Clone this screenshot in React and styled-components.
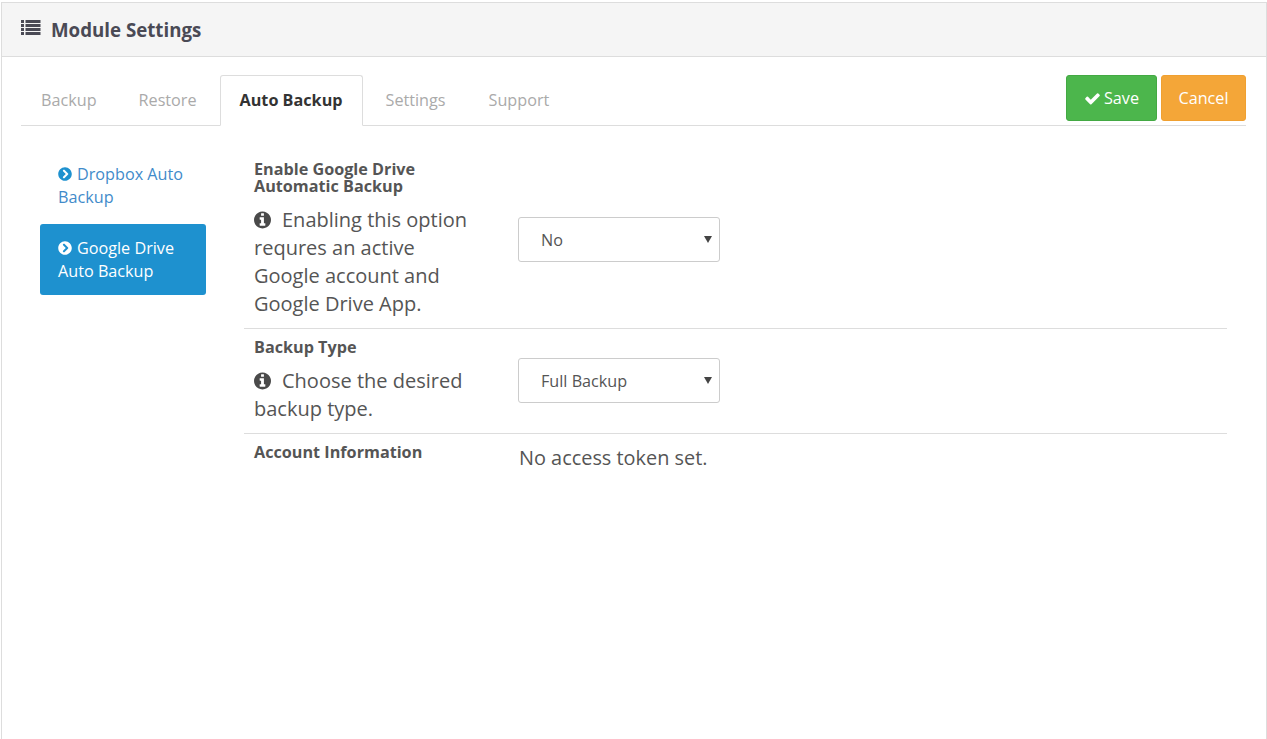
import styled, { createGlobalStyle } from "styled-components";
import { FaChevronCircleRight } from "react-icons/fa";

const GlobalStyle = createGlobalStyle`
  html, body {
    margin: 0;
    padding: 0;
    background: #fff;
    overflow: hidden;
    font-family: "Open Sans", sans-serif;
    color: #555;
  }
`;

const Panel = styled.div`
  height: 737px;
  margin: 2px 0 0 1px;
  width: 1266px;
  box-sizing: border-box;
  border: 1px solid #ddd;
  border-bottom: 0;
`;

const PanelHeader = styled.div`
  height: 53px;
  display: flex;
  align-items: center;
  gap: 10px;
  padding-left: 19px;
  background: #f5f5f5;
  border-bottom: 1px solid #ddd;
  color: #4a4a55;
`;

const PanelTitle = styled.h3`
  margin: 0;
  font-size: 18.7px;
  font-weight: 700;
  line-height: 26px;
`;

const PanelBody = styled.div`
  padding: 18px 20px 0 19px;
`;

const TabBar = styled.div`
  display: flex;
  height: 50px;
  border-bottom: 1px solid #ddd;
`;

const Tab = styled.a`
  box-sizing: border-box;
  height: 51px;
  margin-right: 3px;
  padding: 12px 19px 0;
  font-size: 16.2px;
  line-height: 24px;
  border: 1px solid ${(p) => (p.$active ? "#ddd" : "transparent")};
  border-bottom-color: ${(p) => (p.$active ? "#fff" : "transparent")};
  border-radius: 3px 3px 0 0;
  background: ${(p) => (p.$active ? "#fff" : "transparent")};
  color: ${(p) => (p.$active ? "#333" : "#aaa")};
  font-weight: ${(p) => (p.$active ? 700 : 400)};

  &:first-child {
    margin-right: 2px;
  }
`;

const Actions = styled.div`
  display: flex;
  gap: 4px;
  margin-left: auto;
  align-items: flex-start;
`;

const Button = styled.button`
  display: flex;
  align-items: center;
  justify-content: center;
  gap: 3px;
  height: 46px;
  width: ${(p) => p.$width}px;
  padding: 0;
  font-family: inherit;
  font-size: 16.2px;
  color: #fff;
  background: ${(p) => p.$bg};
  border: 1px solid ${(p) => p.$edge};
  border-radius: 3px;
`;

const Columns = styled.div`
  display: flex;
  padding: 24px 19px 0;
`;

const SideNav = styled.nav`
  flex: 0 0 166px;
  display: flex;
  flex-direction: column;
  gap: 3px;
  margin-right: 38px;
`;

const SideLink = styled.a`
  box-sizing: border-box;
  height: 71px;
  padding: 13px 18px;
  font-size: 16.2px;
  line-height: 23px;
  border-radius: 3px;
  background: ${(p) => (p.$active ? "#1e91cf" : "transparent")};
  color: ${(p) => (p.$active ? "#fff" : "#428bca")};

  svg {
    font-size: 14px;
    vertical-align: -1px;
    margin-right: 5px;
    color: ${(p) => (p.$active ? "#fff" : "#1e91cf")};
  }
`;

const Rows = styled.div`
  flex: 1;
  padding-top: 1px;
`;

const Row = styled.div`
  display: grid;
  grid-template-columns: 274px 1fr;
  border-top: ${(p) => (p.$first ? "0" : "1px solid #ddd")};
`;

const LabelCell = styled.div`
  padding: 10px 44px 10px 10px;
`;

const Label = styled.div`
  font-size: 16.2px;
  font-weight: 700;
  line-height: 17px;
  color: #555;
`;

const Help = styled.div`
  margin-top: 11px;
  font-size: 20px;
  line-height: 28px;
  color: #555;

  svg {
    width: 17px;
    height: 20px;
    vertical-align: -3px;
    margin-right: 11px;
    color: #4a4a4a;
  }
`;

const ValueCell = styled.div`
  display: flex;
  align-items: center;
  padding: 10px 0 ${(p) => p.$bottom ?? 10}px;
`;

const SelectWrap = styled.div`
  position: relative;
  width: 202px;
  height: 45px;

  &::after {
    content: "";
    position: absolute;
    top: 19px;
    right: 8px;
    border-style: solid;
    border-width: 7px 4px 0;
    border-color: #444 transparent transparent;
    pointer-events: none;
  }
`;

const Select = styled.select`
  appearance: none;
  box-sizing: border-box;
  width: 100%;
  height: 100%;
  padding: 0 24px 0 22px;
  font-family: inherit;
  font-size: 16.2px;
  color: #555;
  background: #fff;
  border: 1px solid #ccc;
  border-radius: 3px;
`;

const Value = styled.div`
  padding-left: 1px;
  font-size: 19.9px;
  line-height: 28px;
  color: #555;
`;

const ListBar = styled.rect`
  fill: currentColor;
`;

const ListIcon = () => (
  <svg width="20" height="16" viewBox="0 0 20 16" style={{ marginBottom: 4 }}>
    {[0, 4, 8, 12].map((y) => (
      <g key={y}>
        <ListBar x="0" y={y} width="3" height="3" />
        <ListBar x="4.5" y={y} width="15" height="3" />
      </g>
    ))}
  </svg>
);

const CheckIcon = () => (
  <svg width="17" height="17" viewBox="0 0 1792 1792" fill="currentColor">
    <path d="M1671 566q0 40-28 68l-724 724-136 136q-28 28-68 28t-68-28l-136-136-362-362q-28-28-28-68t28-68l136-136q28-28 68-28t68 28l294 295 656-657q28-28 68-28t68 28l136 136q28 28 28 68z" />
  </svg>
);

const InfoIcon = () => (
  <svg viewBox="0 0 1536 1792" fill="currentColor">
    <path d="M1024 1376v-160q0-14-9-23t-23-9h-96v-512q0-14-9-23t-23-9h-320q-14 0-23 9t-9 23v160q0 14 9 23t23 9h96v320h-96q-14 0-23 9t-9 23v160q0 14 9 23t23 9h448q14 0 23-9t9-23zm-128-896v-160q0-14-9-23t-23-9h-192q-14 0-23 9t-9 23v160q0 14 9 23t23 9h192q14 0 23-9t9-23zm640 416q0 209-103 385.5t-279.5 279.5-385.5 103-385.5-103-279.5-279.5-103-385.5 103-385.5 279.5-279.5 385.5-103 385.5 103 279.5 279.5 103 385.5z" />
  </svg>
);

const App = () => (
  <>
    <GlobalStyle />
    <Panel>
      <PanelHeader>
        <ListIcon />
        <PanelTitle>Module Settings</PanelTitle>
      </PanelHeader>
      <PanelBody>
        <TabBar>
          <Tab>Backup</Tab>
          <Tab>Restore</Tab>
          <Tab $active>Auto Backup</Tab>
          <Tab>Settings</Tab>
          <Tab>Support</Tab>
          <Actions>
            <Button $width={91} $bg="#4cb64c" $edge="#43a943">
              <CheckIcon />
              Save
            </Button>
            <Button $width={85} $bg="#f4a638" $edge="#f0a030">
              Cancel
            </Button>
          </Actions>
        </TabBar>
        <Columns>
          <SideNav>
            <SideLink>
              <FaChevronCircleRight />
              Dropbox Auto Backup
            </SideLink>
            <SideLink $active>
              <FaChevronCircleRight />
              Google Drive Auto Backup
            </SideLink>
          </SideNav>
          <Rows>
            <Row $first>
              <LabelCell>
                <Label>Enable Google Drive Automatic Backup</Label>
                <Help>
                  <InfoIcon />
                  Enabling this option requres an active Google account and Google Drive App.
                </Help>
              </LabelCell>
              <ValueCell>
                <SelectWrap>
                  <Select defaultValue="no">
                    <option value="no">No</option>
                    <option value="yes">Yes</option>
                  </Select>
                </SelectWrap>
              </ValueCell>
            </Row>
            <Row>
              <LabelCell>
                <Label>Backup Type</Label>
                <Help>
                  <InfoIcon />
                  Choose the desired backup type.
                </Help>
              </LabelCell>
              <ValueCell $bottom={11}>
                <SelectWrap>
                  <Select defaultValue="full">
                    <option value="full">Full Backup</option>
                    <option value="db">Database Backup</option>
                  </Select>
                </SelectWrap>
              </ValueCell>
            </Row>
            <Row>
              <LabelCell>
                <Label>Account Information</Label>
              </LabelCell>
              <ValueCell>
                <Value>No access token set.</Value>
              </ValueCell>
            </Row>
          </Rows>
        </Columns>
      </PanelBody>
    </Panel>
  </>
);

export default App;
